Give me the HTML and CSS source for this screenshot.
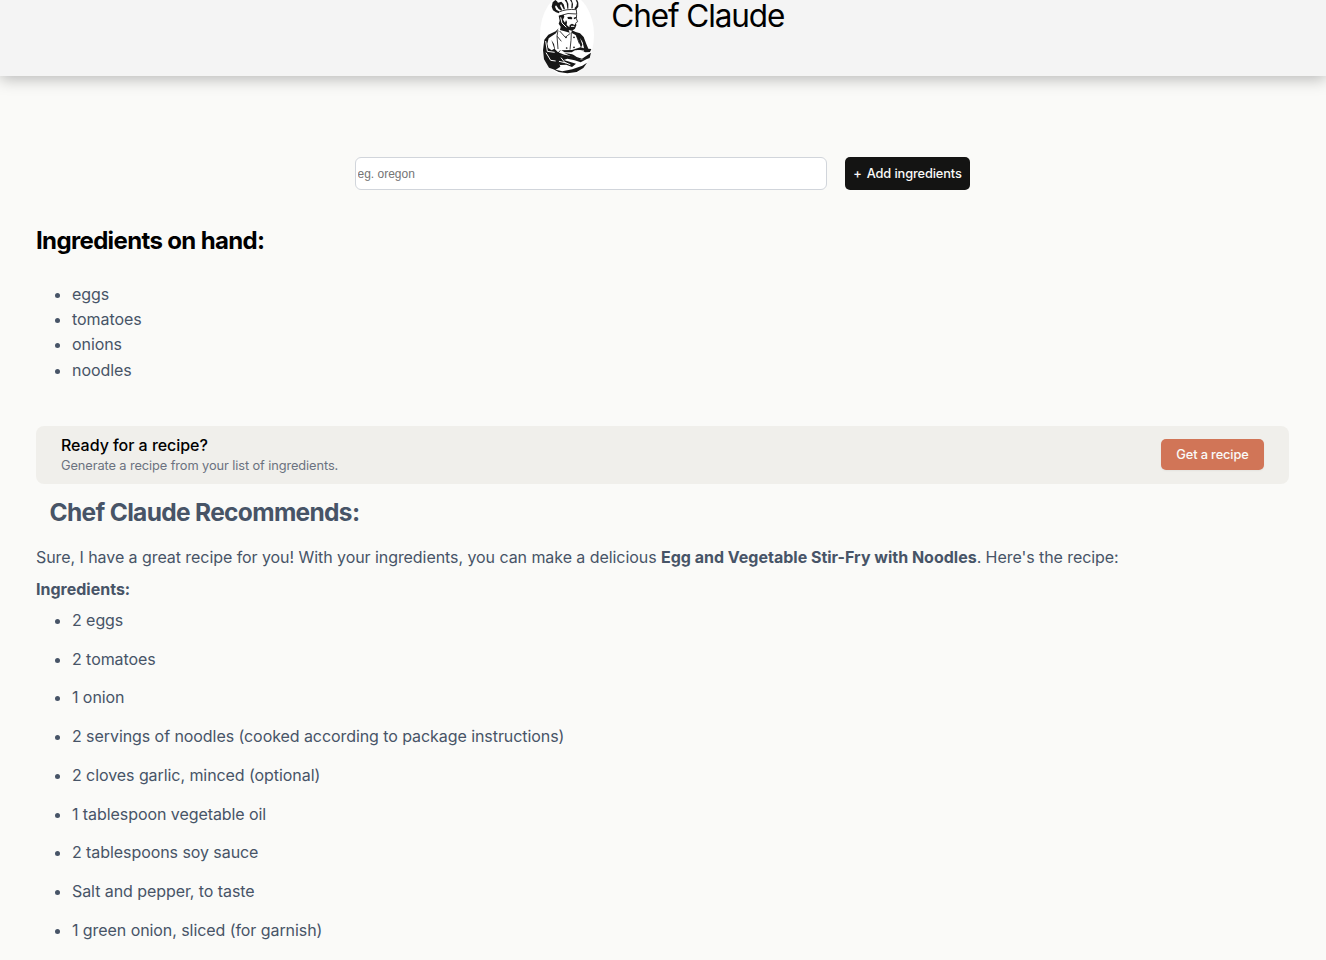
FILE: index.html
```html
<!DOCTYPE html>
<html lang="en">
<head>
<meta charset="utf-8">
<title>Chef Claude</title>
<link rel="stylesheet" href="styles.css">
</head>
<body>
<header class="header">
  <svg class="logo" viewBox="30 0 162 228" aria-hidden="true">
    <ellipse cx="111" cy="105" rx="81" ry="123" fill="#fff"/>
    <g fill="#171717">
      <path d="M76 0L68 7L65 20L69 31L78 37L87 40L87 34L79 29L75 20L78 16L86 27L94 32L96 29L90 17L93 12L101 28L105 28L101 13L94 5L84 8L81 4Z"/>
      <path d="M104 0L110 9L112 26L115 26L115 11L110 0ZM120 0L125 8L124 25L128 25L129 12L125 0ZM137 0L141 9L139 18L133 25L138 29L145 20L145 8L142 1Z"/>
      <path d="M86 47L101 44L103 50L99 59L105 68L108 60L111 66L110 75L118 82L119 75L126 71L134 75L138 67L139 76L135 86L126 92L116 90L119 98L104 94L90 90L92 80L86 71L89 62Z"/>
      <path d="M112 51L123 50L127 53L126 58L114 57ZM131 53L139 50L139 55L132 58Z"/>
      <path d="M86 85L77 94L55 104L43 119L39 151L42 178L57 203L76 210L91 200L84 180L91 169L103 164L84 157L75 148L72 132L64 120L73 146L65 151L55 144L52 131L56 115L78 100Z"/>
      <path d="M126 91L137 96L150 100L161 111L169 132L175 146L184 147L180 156L166 157L150 150L135 151L125 157L104 157L94 151L126 150L151 142L162 145L158 127L150 114L157 134L153 143L145 121L138 106L124 98Z"/>
      <path d="M80 176L88 169L104 164L127 169L154 179L169 178L152 187L134 181L112 176L101 180L121 186L138 191L126 201L109 194L89 195Z"/>
      <path d="M103 159L128 163L140 171L156 176L176 163L183 158L179 174L163 180L145 177L128 171Z"/>
      <path d="M70 208L97 214L127 208L157 197L171 188L160 204L140 216L112 220L86 216Z"/>
    </g>
    <g fill="none" stroke="#171717" stroke-width="2.5">
      <path d="M87 36Q109 26 139 29L140 42Q114 36 88 48M140 43L139 56L143 65L138 68M84 91L81 108L84 147M89 93L106 112L121 100M124 98L123 121L120 149M82 109L94 124M137 101L148 131M54 154L78 165M57 166L76 174M91 151L76 169"/>
    </g>
    <g fill="none" stroke="#fff" stroke-width="3">
      <path d="M47 123L52 154L74 157M48 158L62 181L77 183M93 173L104 187L121 194M141 152L162 153M92 52L96 69L109 82M123 79L133 79M87 184L109 189M120 160L145 164"/>
    </g>
    <g fill="#171717"><circle cx="108" cy="112" r="2.6"/><circle cx="132" cy="112" r="2.6"/><circle cx="110" cy="144" r="2.6"/><circle cx="132" cy="142" r="2.6"/></g>
  </svg>
  <h1 class="title">Chef Claude</h1>
</header>
<main class="main">
  <form class="add-form">
    <input class="input" type="text" placeholder="eg. oregon" aria-label="Add ingredient">
    <button class="add-button" type="button"><span class="plus">+</span>Add ingredients</button>
  </form>
  <h2 class="hand-title">Ingredients on hand:</h2>
  <ul class="list hand-list">
    <li>eggs</li>
    <li>tomatoes</li>
    <li>onions</li>
    <li>noodles</li>
  </ul>
  <section class="ready">
    <div>
      <h3 class="ready-title">Ready for a recipe?</h3>
      <p class="ready-text">Generate a recipe from your list of ingredients.</p>
    </div>
    <button class="recipe-button" type="button">Get a recipe</button>
  </section>
  <section class="recipe">
    <h2 class="recipe-title">Chef Claude Recommends:</h2>
    <p class="intro">Sure, I have a great recipe for you! With your ingredients, you can make a delicious <strong>Egg and Vegetable Stir-Fry with Noodles</strong>. Here's the recipe:</p>
    <p class="subtitle"><strong>Ingredients:</strong></p>
    <ul class="list recipe-list">
      <li>2 eggs</li>
      <li>2 tomatoes</li>
      <li>1 onion</li>
      <li>2 servings of noodles (cooked according to package instructions)</li>
      <li>2 cloves garlic, minced (optional)</li>
      <li>1 tablespoon vegetable oil</li>
      <li>2 tablespoons soy sauce</li>
      <li>Salt and pepper, to taste</li>
      <li>1 green onion, sliced (for garnish)</li>
    </ul>
  </section>
</main>
</body>
</html>
```

FILE: styles.css
```css
* { box-sizing: border-box; }
html { height: 100%; overflow: hidden; }
body {
  margin: 0;
  height: 100%;
  overflow: hidden;
  background: #fafaf8;
  color: #475467;
  font: 16px/25px Inter, sans-serif;
}
h1, h2, h3, p, ul { margin: 0; }
.header {
  display: flex;
  justify-content: center;
  gap: 17.5px;
  height: 76px;
  padding-right: 2px;
  background: #f4f4f4;
  box-shadow: 0 3px 15px rgba(0, 0, 0, .27);
}
.logo { width: 54px; height: 76px; }
.title {
  color: #000;
  font-size: 31.5px;
  font-weight: 400;
  line-height: 31px;
  letter-spacing: -1.1px;
}
.main { padding: 81px 37px 0 36px; }
.add-form {
  display: flex;
  justify-content: center;
  gap: 18px;
  height: 33px;
  margin-right: 1px;
}
.input {
  width: 472px;
  padding: 1px 2px;
  border: 1px solid #d1d5db;
  border-radius: 6px;
  background: #fff;
  font: 12px "Liberation Sans", Arial, sans-serif;
}
.add-button, .recipe-button {
  padding: 0;
  border: 0;
  border-radius: 5px;
  font: 500 12.8px/16px Inter, sans-serif;
  letter-spacing: -.12px;
}
.add-button {
  width: 125px;
  padding: 1px 0 0 1px;
  background: #141413;
  color: #fafaf8;
}
.plus { margin-right: 5px; }
.hand-title {
  margin-top: 36px;
  color: #000;
  font-size: 24px;
  line-height: 30px;
  letter-spacing: -.64px;
}
.list { padding-left: 36px; letter-spacing: -.07px; }
.hand-list { margin-top: 26px; line-height: 25.2px; }
.ready {
  display: flex;
  align-items: center;
  justify-content: space-between;
  height: 58px;
  margin-top: 43.2px;
  padding: 0 25px;
  border-radius: 8px;
  background: #f0efeb;
}
.ready-title {
  color: #000;
  font-size: 16px;
  font-weight: 500;
  line-height: 20px;
  letter-spacing: -.04px;
}
.ready-text {
  color: #6b7280;
  font-size: 12.8px;
  line-height: 20px;
  padding-top: 1px;
  margin-bottom: -1px;
  letter-spacing: -.09px;
}
.recipe-button {
  width: 103px;
  height: 31px;
  margin-bottom: 2px;
  padding-top: 1px;
  background: #d17557;
  color: #fafaf8;
  box-shadow: 0 1px 2px rgba(0, 0, 0, .05);
}
.recipe-title {
  margin: 13px 0 0 13.5px;
  font-size: 24.5px;
  line-height: 30px;
  letter-spacing: -.67px;
}
.intro { margin-top: 18px; letter-spacing: -.063px; }
.intro strong { letter-spacing: 0; }
.subtitle { margin-top: 7px; }
.recipe-list { margin-top: -1px; line-height: 38.72px; }
```
